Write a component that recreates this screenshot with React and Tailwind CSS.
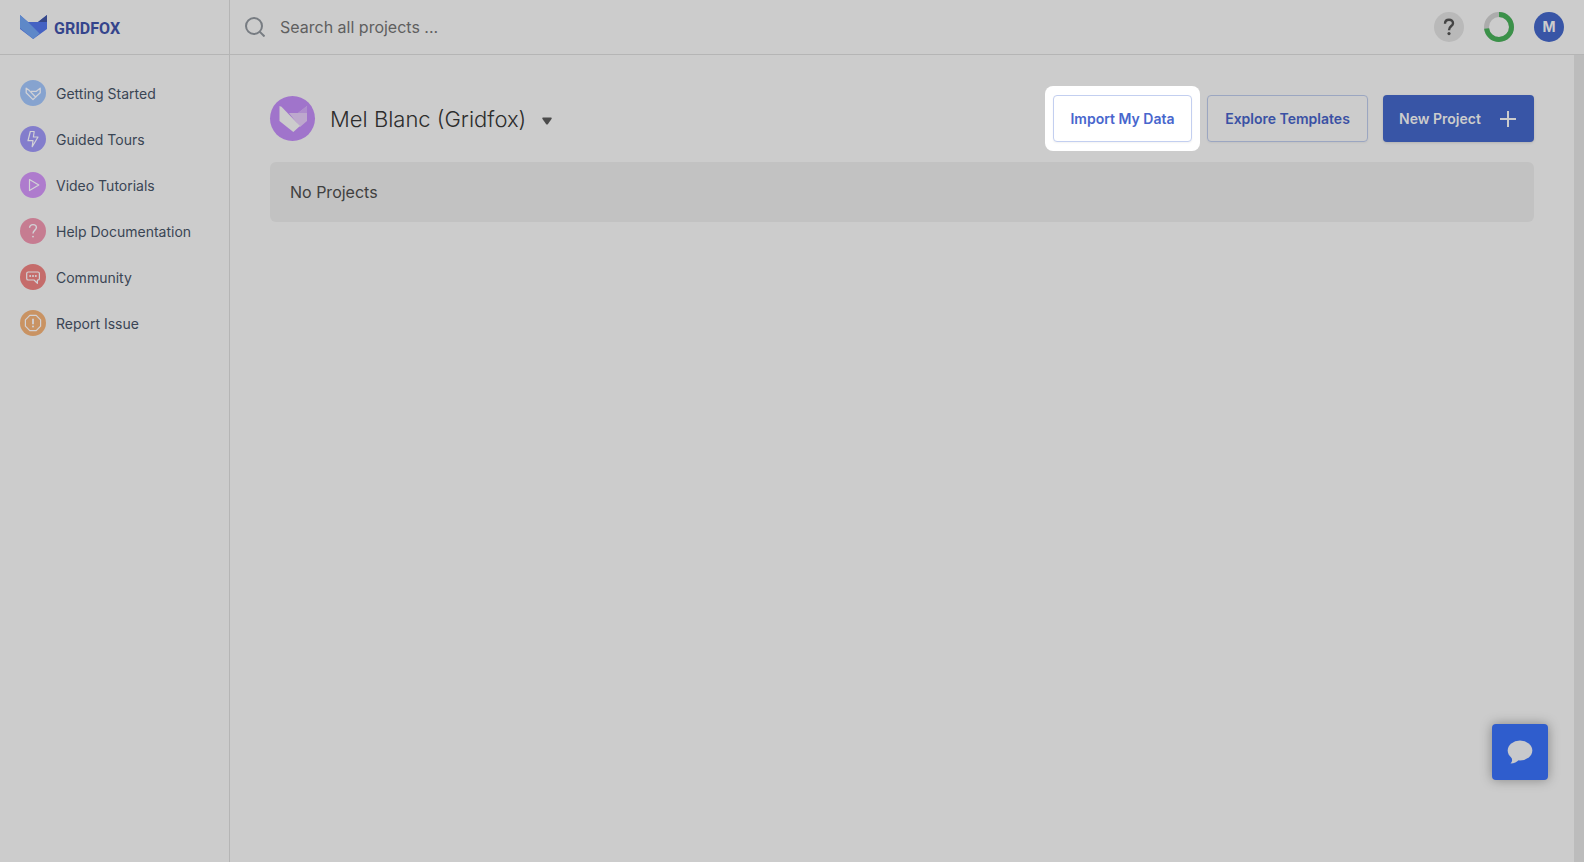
import React from "react";

const font = "font-['Inter','Liberation_Sans',sans-serif]";

function FoxOutline() {
  return (
    <svg viewBox="0 0 26 26" className="size-[26px]" fill="none" stroke="currentColor" strokeWidth="1.3" strokeLinejoin="round">
      <path d="M6.2 8.2V12.8L13 19.6L15.6 17L9.4 10.6Z" />
      <path d="M11 11.4H16L20.2 8.2V12.8L15.6 17" />
    </svg>
  );
}

function Bolt() {
  return (
    <svg viewBox="0 0 26 26" className="size-[26px]" fill="none" stroke="currentColor" strokeWidth="1.2" strokeLinejoin="round">
      <path d="M10.3 5.5H14.2L13.4 11H18L12.2 20.7L13 14.7H8Z" />
    </svg>
  );
}

function Play() {
  return (
    <svg viewBox="0 0 26 26" className="size-[26px]" fill="none" stroke="currentColor" strokeWidth="1.2" strokeLinejoin="round">
      <path d="M9.5 7.5L18.8 13L9.5 18.5Z" />
    </svg>
  );
}

function Question() {
  return (
    <svg viewBox="0 0 26 26" className="size-[26px]" fill="none" stroke="currentColor" strokeWidth="1.4">
      <path d="M9.6 9.8C9.6 7.7 11 6.6 13 6.6C15 6.6 16.4 7.8 16.4 9.6C16.4 12.2 13 12.2 13 15.6" />
      <circle cx="13" cy="18.6" r="0.9" fill="currentColor" stroke="none" />
    </svg>
  );
}

function Bubble() {
  return (
    <svg viewBox="0 0 26 26" className="size-[26px]" fill="none" stroke="currentColor" strokeWidth="1.2" strokeLinejoin="round">
      <path d="M8.3 8H17.8Q19.4 8 19.4 9.6V14.4Q19.4 16 17.8 16H17.4V19.3L14 16H8.3Q6.7 16 6.7 14.4V9.6Q6.7 8 8.3 8Z" />
      <g fill="currentColor" stroke="none">
        <circle cx="10.2" cy="12" r="1" />
        <circle cx="13" cy="12" r="1" />
        <circle cx="15.8" cy="12" r="1" />
      </g>
    </svg>
  );
}

function Alert() {
  return (
    <svg viewBox="0 0 26 26" className="size-[26px]" fill="none" stroke="currentColor" strokeWidth="1.2">
      <path d="M9.8 5.4H16.2L20.6 9.8V16.2L16.2 20.6H9.8L5.4 16.2V9.8Z" strokeLinejoin="round" />
      <path d="M13 8.8V14.2" strokeWidth="1.8" />
      <circle cx="13" cy="16.6" r="1" fill="currentColor" stroke="none" />
    </svg>
  );
}

const links = [
  { label: "Getting Started", color: "bg-[#86a3cf]", Icon: FoxOutline },
  { label: "Guided Tours", color: "bg-[#837dcc]", Icon: Bolt },
  { label: "Video Tutorials", color: "bg-[#ae7bcd]", Icon: Play },
  { label: "Help Documentation", color: "bg-[#c67c91]", Icon: Question },
  { label: "Community", color: "bg-[#c56c6b]", Icon: Bubble },
  { label: "Report Issue", color: "bg-[#c99363]", Icon: Alert },
];

function Sidebar() {
  return (
    <aside className="flex w-[230px] shrink-0 flex-col border-r border-[#b5b5b5]">
      <a href="#" className="flex h-[55px] items-center gap-[7px] border-b border-[#b5b5b5] pl-5">
        <svg viewBox="0 0 27 24" className="h-6 w-[27px]">
          <path d="M0 0L8 7H18L27 0V14L13.2 24L0 14Z" fill="#4562c3" />
          <path d="M27 0V7H18Z" fill="#364789" />
          <path d="M0 0L8 7L19.6 18.5L13.2 24L0 13Z" fill="#5e88c8" />
        </svg>
        <span className="pt-[3px] text-base leading-6 font-bold text-[#35458c] font-['Roboto','Liberation_Sans',sans-serif]">GRIDFOX</span>
      </a>
      <nav className="flex flex-col gap-[18px] px-5 pt-6">
        {links.map(({ label, color, Icon }) => (
          <a key={label} href="#" className="flex items-center gap-[10px] text-sm text-[#3a4554]">
            <span className={`size-[26px] shrink-0 rounded-full text-[#d2d2d6] ${color}`}>
              <Icon />
            </span>
            <span className="pt-[2px] leading-[26px]">{label}</span>
          </a>
        ))}
      </nav>
    </aside>
  );
}

function Header() {
  return (
    <header className="flex h-[55px] shrink-0 items-center border-b border-[#b5b5b5] pr-5 pl-[15px]">
      <label htmlFor="search" aria-label="Search" className="text-[#777c82]">
        <svg viewBox="0 0 20 20" className="size-5" fill="none" stroke="currentColor" strokeWidth="2">
          <circle cx="9" cy="9" r="8" />
          <path d="M14.6 14.6L19.5 19.5" />
        </svg>
      </label>
      <input
        id="search"
        type="text"
        placeholder="Search all projects ..."
        className="ml-[15px] min-w-0 flex-1 bg-transparent text-base outline-none placeholder:text-[#5f5f5f]"
      />
      <div className="flex items-center gap-5">
        <button aria-label="Help" className="flex size-[30px] items-center justify-center rounded-full bg-[#b9b9b9] text-[#444]">
          <svg viewBox="0 0 12 18" className="h-[18px] w-3" fill="none" stroke="currentColor" strokeWidth="2.4">
            <path d="M2 5.8C2 3.2 3.6 1.8 6 1.8C8.4 1.8 10 3.2 10 5.2C10 8.2 6 8 6 12.2" />
            <circle cx="6" cy="15.6" r="1.6" fill="currentColor" stroke="none" />
          </svg>
        </button>
        <button aria-label="Progress" className="size-[30px]">
          <svg viewBox="0 0 30 30" className="size-[30px] -rotate-90" fill="none" strokeWidth="5">
            <circle cx="15" cy="15" r="12.5" stroke="#acacac" />
            <circle cx="15" cy="15" r="12.5" stroke="#3b9149" pathLength="100" strokeDasharray="73 100" />
          </svg>
        </button>
        <button className="size-[30px] rounded-full bg-[#3855a6] text-sm font-bold text-[#cccccc]">M</button>
      </div>
    </header>
  );
}

function ProjectHeader() {
  return (
    <div className="flex items-center justify-between">
      <button className="flex items-center text-[22px] text-[#2d2d2d]">
        <span className="mr-[15px] flex size-[45px] items-center justify-center rounded-full bg-[#a074cb]">
          <svg viewBox="0 0 28 26" className="h-[26px] w-7">
            <path d="M10 7H19L28 0V15L21 21Z" fill="#bda8cd" />
            <path d="M28 0V7H19Z" fill="#ae8dcc" />
            <path d="M0.5 0L2.5 0.8L21 20L14.3 26L0.5 15Z" fill="#cccccc" />
          </svg>
        </span>
        <span className="pt-[2px] font-light">Mel Blanc (Gridfox)</span>
        <svg viewBox="0 0 10 8" className="mt-1 ml-4 h-2 w-[10px]">
          <path d="M1 0.5H9Q10.2 0.7 9.5 2L6 7Q5 8 4 7L0.5 2Q-0.2 0.7 1 0.5Z" fill="#4b4b4b" />
        </svg>
      </button>
      <div className="flex items-center gap-[7px] text-sm font-semibold">
        <div className="rounded-lg bg-white px-2 py-[9px]">
          <button className="h-[47px] min-w-[139px] rounded border border-[#c3cff0] bg-white px-[15px] text-[#4866cd] shadow-xs">
            Import My Data
          </button>
        </div>
        <div className="flex gap-[15px]">
          <button className="h-[47px] min-w-[161px] rounded border border-[#9ba6c1] px-[15px] text-[#3a51a4] shadow-xs">
            Explore Templates
          </button>
          <button className="flex h-[47px] min-w-[151px] items-center justify-between rounded bg-[#3855a6] pr-[18px] pl-4 text-[#cccccc] shadow-sm">
            New Project
            <svg viewBox="0 0 16 16" className="size-4" stroke="currentColor" strokeWidth="2">
              <path d="M8 0V16M0 8H16" />
            </svg>
          </button>
        </div>
      </div>
    </div>
  );
}

function App() {
  return (
    <div className={`relative flex min-h-screen bg-[#cccccc] ${font}`}>
      <Sidebar />
      <div className="flex min-w-0 flex-1 flex-col">
        <Header />
        <main className="flex-1 border-r-10 border-[#bcbcbc] px-10 pt-[31px]">
          <ProjectHeader />
          <p className="mt-[11px] rounded-md bg-[#c2c2c2] px-5 py-[18px] text-base text-[#404040]">No Projects</p>
        </main>
      </div>
      <button
        aria-label="Open chat"
        className="fixed right-9 bottom-[82px] flex size-14 items-center justify-center rounded bg-[#2f5dcd] shadow-[0_0_12px_rgba(0,0,0,0.35)]"
      >
        <svg viewBox="0 0 26 24" className="h-6 w-[26px]" fill="#c8c9cc">
          <ellipse cx="13" cy="10.5" rx="12.3" ry="10" />
          <path d="M4 17Q6.5 20.5 3.5 23.6Q9 23.6 12 19.5Z" />
        </svg>
      </button>
    </div>
  );
}

export default App;
